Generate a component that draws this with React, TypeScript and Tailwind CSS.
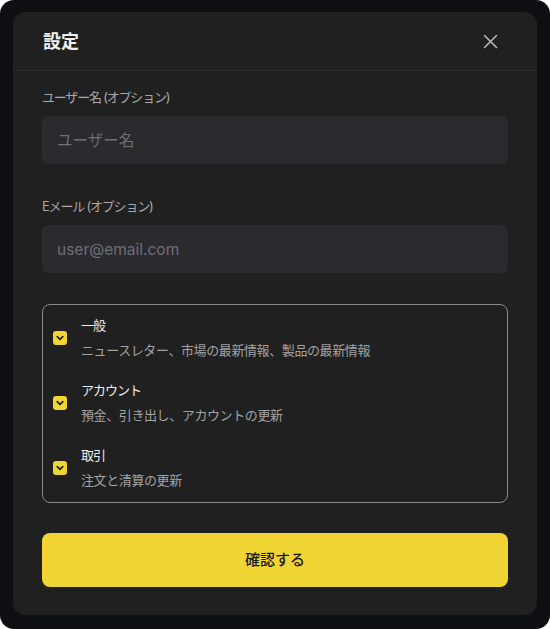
import React from 'react';

const fontStack = 'font-["Inter","Noto_Sans_CJK_JP",sans-serif]';

type Topic = { id: string; title: string; description: string };

const topics: Topic[] = [
  { id: 'general', title: '一般', description: 'ニュースレター、市場の最新情報、製品の最新情報' },
  { id: 'account', title: 'アカウント', description: '預金、引き出し、アカウントの更新' },
  { id: 'trade', title: '取引', description: '注文と清算の更新' },
];

// small yellow checkbox with a chevron tick
const CheckBox: React.FC = () => (
  <span className="flex h-[14px] w-[14px] shrink-0 items-center justify-center rounded-[3px] bg-[#f0d535]">
    <svg width="8" height="6" viewBox="0 0 8 6" fill="none">
      <path d="M1.2 1.6 4 4.3 6.8 1.6" stroke="#1c1c1c" strokeWidth="1.6" strokeLinecap="round" strokeLinejoin="round" />
    </svg>
  </span>
);

const Field: React.FC<{ label: string; placeholder: string }> = ({ label, placeholder }) => (
  <div className="flex flex-col">
    <label className="text-[13px] leading-[18px] tracking-[-1.2px] text-[#a8a8a8]">{label}</label>
    <input
      className="mt-[10px] h-[48px] w-full rounded-[6px] bg-[#2a2a2f] px-[15px] text-[15.5px] text-[#e5e5e5] outline-none placeholder:text-[#6f6f74]"
      placeholder={placeholder}
    />
  </div>
);

export default function App() {
  return (
    <div className={`bg-white ${fontStack}`}>
      <div className="h-[629px] overflow-hidden rounded-[14px] bg-[#0e0f13] pt-[12px] pl-[13px]">
        <div className="flex h-[603px] w-[524px] flex-col rounded-[12px] bg-[#202020]">
          {/* Header */}
          <div className="flex h-[59px] items-center justify-between border-b border-[#2c2c33] pl-[30px] pr-[39px]">
            <h1 className="text-[18px] font-bold text-[#f0f0f0]">設定</h1>
            <button className="flex h-[16px] w-[16px] items-center justify-center">
              <svg width="15" height="15" viewBox="0 0 15 15" fill="none">
                <path d="M1.5 1.5 13.5 13.5M13.5 1.5 1.5 13.5" stroke="#bdbdbd" strokeWidth="1.5" strokeLinecap="round" />
              </svg>
            </button>
          </div>

          {/* Body */}
          <div className="flex flex-1 flex-col px-[29px] pt-[17px]">
            <Field label="ユーザー名 (オプション)" placeholder="ユーザー名" />
            <div className="mt-[33px]">
              <Field label="Eメール (オプション)" placeholder="user@email.com" />
            </div>

            <div className="mt-[31px] flex flex-col gap-[20px] rounded-[8px] border border-[#8a8a8a] px-[10px] pt-[10px] pb-[12px]">
              {topics.map((t) => (
                <div key={t.id} className="flex items-center gap-[14px]">
                  <CheckBox />
                  <div className="flex flex-col gap-[5px]">
                    <span className="text-[13px] leading-[20px] tracking-[-1px] text-[#ededed]">{t.title}</span>
                    <span className="text-[13px] leading-[20px] tracking-[-0.4px] text-[#a3a3a3]">{t.description}</span>
                  </div>
                </div>
              ))}
            </div>

            <button className="mt-[30px] h-[54px] w-full rounded-[8px] bg-[#f0d535] text-[15px] font-medium text-[#1a1a1a]">
              確認する
            </button>
          </div>
        </div>
      </div>
    </div>
  );
}
